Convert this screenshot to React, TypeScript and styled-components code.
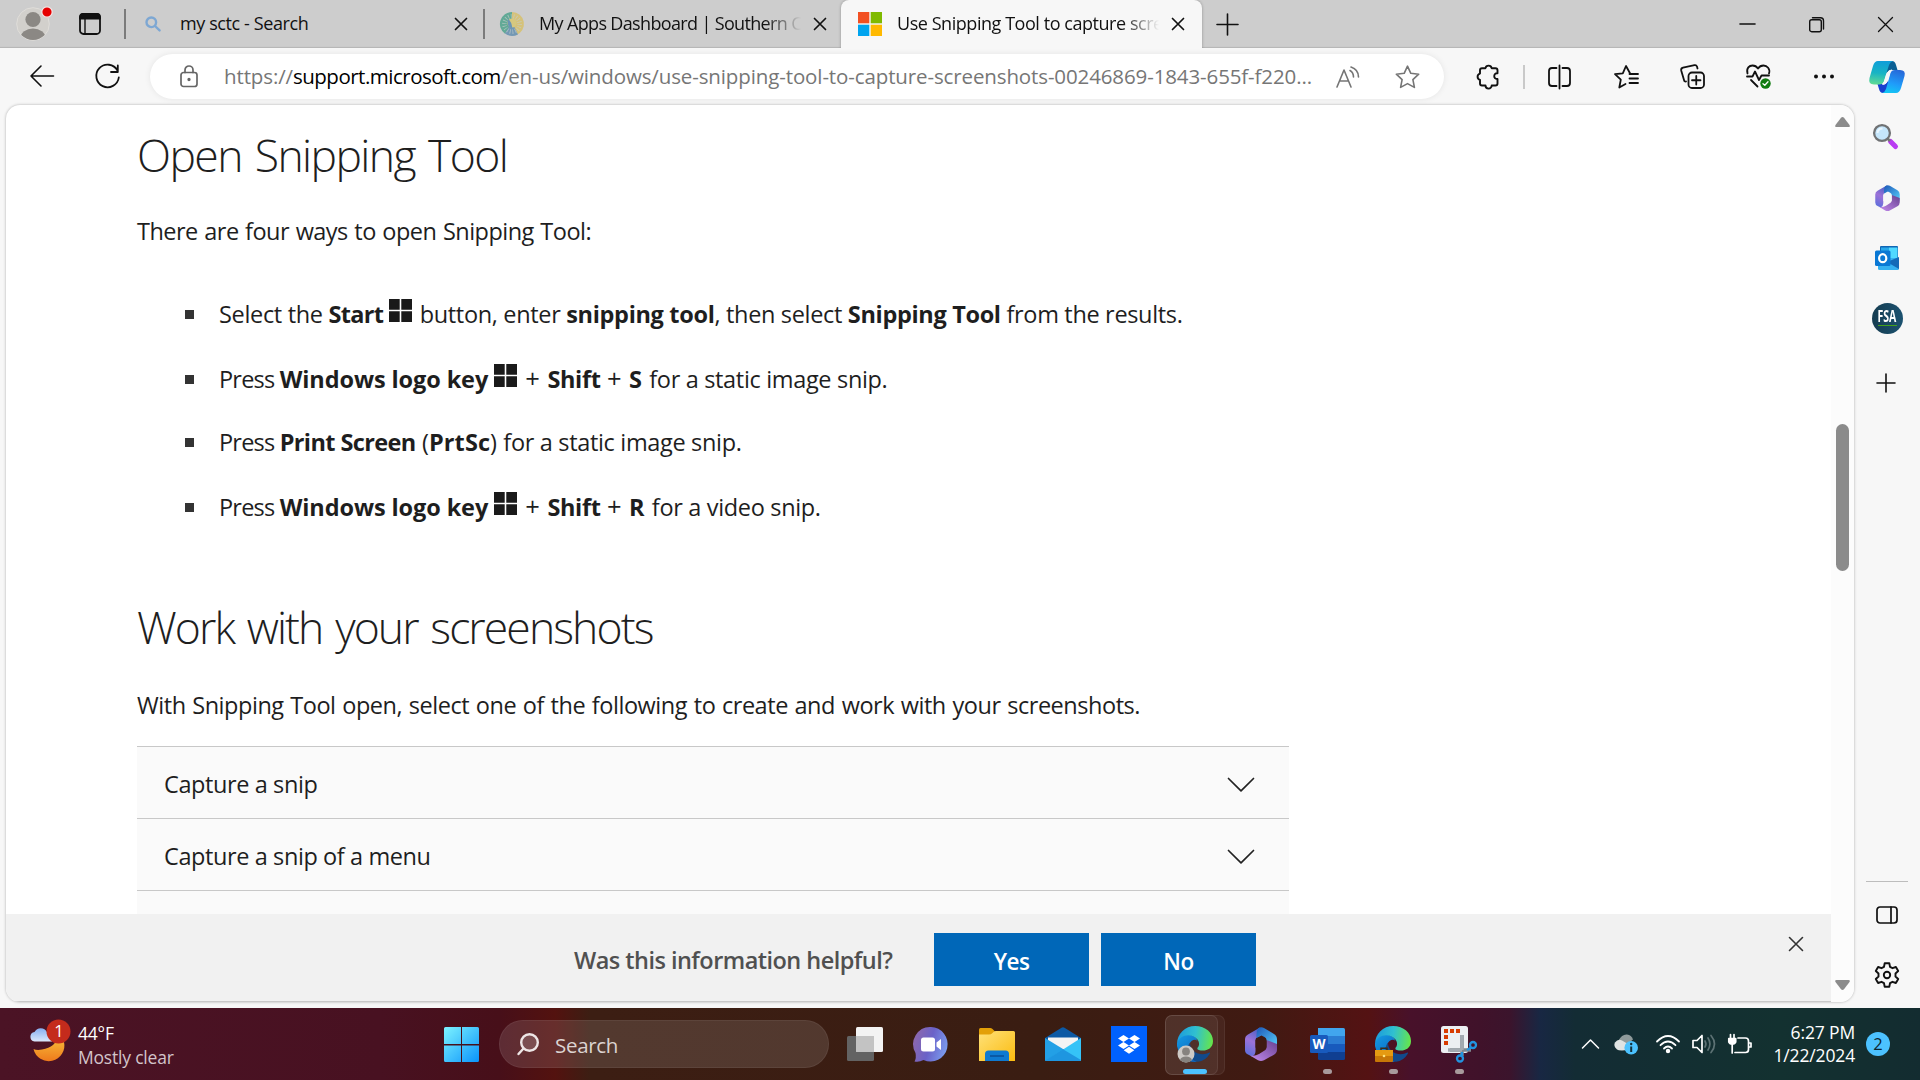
import React from "react";
import styled, { createGlobalStyle } from "styled-components";

const Global = createGlobalStyle`
  * { box-sizing: border-box; }
  html, body { margin: 0; padding: 0; overflow: hidden; }
  body { font-family: "Open Sans", "Noto Sans", sans-serif; color: #1e1e1e; }
  svg { display: block; flex: none; overflow: visible; }
  button { font: inherit; border: 0; background: none; padding: 0; }
`;

const Screen = styled.div`
  width: 1920px;
  height: 1080px;
  display: flex;
  flex-direction: column;
  background: #f7f7f7;
  overflow: hidden;
`;

/* ---------- shared ---------- */
const Slot = styled.span<{ $w: number; $ml?: number }>`
  width: ${(p) => p.$w}px;
  margin-left: ${(p) => p.$ml ?? 0}px;
  display: flex;
  justify-content: center;
  align-items: center;
  flex: none;
`;

/* ---------- tab strip ---------- */
const TabStrip = styled.header`
  height: 48px;
  flex: none;
  display: flex;
  align-items: center;
  background: #cdcdcd;
  box-shadow: inset 0 -2px 1px -1px #b5b5b5;
`;
const Divider = styled.span<{ $ml: number; $h: number; $c: string }>`
  width: 2px;
  height: ${(p) => p.$h}px;
  margin-left: ${(p) => p.$ml}px;
  background: ${(p) => p.$c};
  flex: none;
`;
const Tab = styled.div<{ $w: number; $pl: number; $active?: boolean }>`
  width: ${(p) => p.$w}px;
  height: 48px;
  padding-left: ${(p) => p.$pl}px;
  display: flex;
  align-items: center;
  flex: none;
  border-radius: 8px 8px 0 0;
  background: ${(p) => (p.$active ? "#f7f7f7" : "transparent")};
  box-shadow: ${(p) => (p.$active ? "0 0 3px rgba(0,0,0,.3)" : "none")};
  clip-path: inset(0 -4px 0 -4px);
`;
const TabTitle = styled.span<{ $w: number; $ml: number; $ls: number; $fade?: boolean }>`
  width: ${(p) => p.$w}px;
  margin-left: ${(p) => p.$ml}px;
  padding-bottom: 2px;
  font-size: 18px;
  line-height: 28px;
  letter-spacing: ${(p) => p.$ls}px;
  color: #111;
  white-space: nowrap;
  flex: none;
  mask-image: ${(p) => (p.$fade ? "linear-gradient(90deg,#000 calc(100% - 36px),transparent)" : "none")};
`;

/* ---------- toolbar ---------- */
const Toolbar = styled.nav`
  height: 57px;
  flex: none;
  display: flex;
  align-items: center;
`;
const AddressBar = styled.div`
  width: 1294px;
  height: 45px;
  margin-left: 30px;
  padding-left: 30px;
  display: flex;
  align-items: center;
  flex: none;
  border-radius: 23px;
  background: #fff;
  box-shadow: 0 0 6px rgba(0, 0, 0, 0.08);
`;
const Url = styled.span`
  width: 1092px;
  margin-left: 26px;
  padding-bottom: 2px;
  font-size: 20.5px;
  line-height: 30px;
  letter-spacing: -0.12px;
  color: #767676;
  white-space: nowrap;
  flex: none;
  b { font-weight: 400; letter-spacing: -0.5px; color: #000; }
`;

/* ---------- page body ---------- */
const Body = styled.div`
  height: 903px;
  flex: none;
  display: flex;
  padding-left: 6px;
`;
const Page = styled.section`
  width: 1848px;
  height: 897px;
  display: flex;
  background: #fff;
  border-radius: 14px;
  box-shadow: 0 0 3px rgba(0, 0, 0, 0.3);
  overflow: hidden;
  flex: none;
`;
const Document = styled.div`
  width: 1825px;
  display: flex;
  flex-direction: column;
  border-bottom: 1px solid #c8c8c8;
`;
const Article = styled.article`
  height: 809px;
  flex: none;
  padding: 20px 0 0 131px;
  overflow: hidden;
`;
const Heading = styled.h2<{ $mt: number; $ls: number }>`
  margin: ${(p) => p.$mt}px 0 0;
  font-size: 44.5px;
  font-weight: 300;
  line-height: 60px;
  letter-spacing: ${(p) => p.$ls}px;
  word-spacing: 3px;
  white-space: nowrap;
`;
const Paragraph = styled.p<{ $mt: number; $ls: number }>`
  margin: ${(p) => p.$mt}px 0 0;
  font-size: 23.5px;
  line-height: 36px;
  letter-spacing: ${(p) => p.$ls}px;
  word-spacing: 1px;
  white-space: nowrap;
`;
const Steps = styled.ul`
  list-style: none;
  margin: 45px 0 0;
  padding: 0 0 0 48px;
`;
const Step = styled.li<{ $key?: boolean }>`
  display: flex;
  align-items: center;
  padding-top: ${(p) => (p.$key ? 2 : 0)}px;
  margin-bottom: 27px;
  font-size: 23.5px;
  line-height: 36px;
  letter-spacing: -0.33px;
  white-space: nowrap;
  &::before {
    content: "";
    width: 9px;
    height: 9px;
    margin-right: 25px;
    background: #333;
    flex: none;
  }
  svg { display: inline-block; vertical-align: 1px; margin-right: 2px; }
`;
const Spaced = styled.span<{ $ls: number; $bold?: boolean }>`
  letter-spacing: ${(p) => p.$ls}px;
  font-weight: ${(p) => (p.$bold ? 700 : 400)};
`;
const PlusSign = styled.span`
  margin: 0 2px 0 0.6px;
  font-size: 25.5px;
  line-height: 20px;
`;
const Accordion = styled.div`
  width: 1152px;
  margin-top: 23px;
`;
const AccordionRow = styled.div`
  height: 72px;
  padding: 3px 35px 0 27px;
  display: flex;
  align-items: center;
  justify-content: space-between;
  border-top: 1px solid #c8c8c8;
  background: #fafafa;
  font-size: 23.5px;
  letter-spacing: -0.4px;
  svg { margin-top: 2px; }
`;
const Feedback = styled.div`
  height: 87px;
  flex: none;
  display: flex;
  padding-left: 568px;
  background: #f1f1f1;
`;
const Question = styled.span`
  width: 360px;
  padding-top: 28px;
  font-size: 23.5px;
  font-weight: 600;
  line-height: 36px;
  letter-spacing: -0.53px;
  color: #505050;
  white-space: nowrap;
`;
const Answer = styled.button`
  width: 155px;
  height: 53px;
  margin: 19px 12px 0 0;
  padding-top: 3px;
  background: #0067b8;
  color: #fff;
  font-size: 22.5px;
  font-weight: 600;
  letter-spacing: -0.5px;
`;
const Dismiss = styled.button`
  width: 14px;
  height: 14px;
  margin: 23px 0 0 521px;
`;
const Scrollbar = styled.div`
  width: 23px;
  padding: 12px 0 12px;
  display: flex;
  flex-direction: column;
  align-items: center;
  background: #fcfcfc;
`;
const Thumb = styled.div`
  width: 13px;
  height: 147px;
  margin: 297px 0 409px;
  border-radius: 7px;
  background: #8b8b8b;
  flex: none;
`;

/* ---------- sidebar ---------- */
const Sidebar = styled.aside`
  width: 66px;
  display: flex;
  flex-direction: column;
  align-items: center;
`;
const SideItem = styled.span<{ $mt: number; $h: number; $mr?: number }>`
  height: ${(p) => p.$h}px;
  margin: ${(p) => p.$mt}px ${(p) => p.$mr ?? 0}px 0 0;
  display: flex;
  align-items: center;
  flex: none;
`;
const Fsa = styled.span`
  width: 31px;
  height: 31px;
  border-radius: 50%;
  background: linear-gradient(90deg, #153c50, #1c5270);
  display: flex;
  flex-direction: column;
  align-items: center;
  color: #fff;
  font: 700 15.5px/15px "Open Sans", sans-serif;
  padding-top: 6px;
  span { transform: scaleX(0.68); }
  &::after {
    content: "";
    width: 19px;
    height: 1px;
    margin-top: 1px;
    background: #43a01c;
  }
`;
const SideRule = styled.span`
  width: 42px;
  height: 1px;
  margin-top: 489px;
  background: #bdbdbd;
  flex: none;
`;

/* ---------- taskbar ---------- */
const Taskbar = styled.footer`
  height: 72px;
  flex: none;
  display: flex;
  align-items: center;
  background: linear-gradient(
    90deg,
    #4b1325 0, #481121 380px, #470f19 500px, #53120f 555px, #3c1e13 590px, #3a1d12 1040px,
    #401a12 1260px, #541213 1368px, #48112a 1410px, #40122a 1480px, #3b142c 1510px, #182743 1540px,
    #132c34 1575px, #133130 1780px, #132c30 1920px
  );
`;
const Weather = styled.div`
  width: 113px;
  margin-left: 6px;
  padding-top: 2px;
  display: flex;
  flex-direction: column;
  font-size: 17.5px;
  line-height: 24px;
  letter-spacing: -0.2px;
  white-space: nowrap;
  color: #fff;
  span + span { color: #d3c4ca; }
`;
const SearchBox = styled.div`
  width: 330px;
  height: 48px;
  margin-left: 20px;
  padding: 1px 0 0 17px;
  display: flex;
  align-items: center;
  gap: 16px;
  border-radius: 24px;
  border: 1px solid rgba(255, 255, 255, 0.06);
  background: rgba(255, 255, 255, 0.12);
  color: #dcd3d1;
  font-size: 20.5px;
  letter-spacing: -0.3px;
  flex: none;
`;
const AppButton = styled.div<{ $state?: "active" | "open" }>`
  position: relative;
  width: 66px;
  height: 60px;
  display: flex;
  justify-content: center;
  align-items: center;
  flex: none;
  &::after {
    content: "";
    position: absolute;
    left: ${(p) => (p.$state === "active" ? 21 : 28.5)}px;
    bottom: 0;
    width: ${(p) => (p.$state === "active" ? 24 : 9)}px;
    height: ${(p) => (p.$state ? 5 : 0)}px;
    border-radius: 3px;
    background: ${(p) => (p.$state === "active" ? "#4cc2ff" : "#a89a9c")};
  }
`;
const ActiveStack = styled.div`
  position: absolute;
  left: 3px;
  top: 1px;
  width: 60px;
  height: 60px;
  border-radius: 7px;
  border: 1px solid rgba(255, 255, 255, 0.06);
  background: rgba(255, 255, 255, 0.05);
  &::after {
    content: "";
    position: absolute;
    inset: -1px 6px -1px -1px;
    border-radius: 7px;
    border: 1px solid rgba(255, 255, 255, 0.08);
    background: rgba(255, 255, 255, 0.05);
  }
`;
const Raised = styled.span`
  position: relative;
  display: flex;
`;
const Clock = styled.div`
  width: 100px;
  margin-left: 3px;
  display: flex;
  flex-direction: column;
  align-items: flex-end;
  font-size: 17.5px;
  line-height: 23px;
  letter-spacing: -0.15px;
  color: #fff;
  white-space: nowrap;
  padding-bottom: 1px;
`;
const Count = styled.span`
  width: 24px;
  height: 24px;
  margin-left: 11px;
  border-radius: 50%;
  background: #4cc2ff;
  color: #0d2530;
  font-size: 16.5px;
  line-height: 24px;
  text-align: center;
`;

/* ---------- icons ---------- */
type LineProps = { w: number; h: number; c?: string; s?: number; children: React.ReactNode };
const Line = ({ w, h, c = "#111", s = 1.6, children }: LineProps) => (
  <svg width={w} height={h} viewBox={`0 0 ${w} ${h}`} fill="none" stroke={c} strokeWidth={s} strokeLinecap="round" strokeLinejoin="round">
    {children}
  </svg>
);
const Close = ({ size = 12, s = 1.7, c = "#111" }: { size?: number; s?: number; c?: string }) => (
  <Line w={size} h={size} s={s} c={c}>
    <path d={`M.5 .5L${size - 0.5} ${size - 0.5}M${size - 0.5} .5L.5 ${size - 0.5}`} />
  </Line>
);
const Plus = ({ size }: { size: number }) => (
  <Line w={size} h={size} s={1.6}>
    <path d={`M${size / 2} 0V${size}M0 ${size / 2}H${size}`} />
  </Line>
);
const Avatar = () => (
  <svg width="38" height="38" viewBox="0 0 38 38">
    <defs><clipPath id="av"><circle cx="17" cy="19" r="16" /></clipPath></defs>
    <circle cx="17" cy="19" r="16.3" fill="#d2d0cc" stroke="#e0deda" strokeWidth="1" />
    <g clipPath="url(#av)" fill="#8b8884">
      <circle cx="17" cy="14.500" r="7.600" />
      <ellipse cx="17" cy="32.500" rx="12.500" ry="9" />
    </g>
    <circle cx="31" cy="7" r="5.200" fill="#e60000" stroke="#f3e8e8" strokeWidth="1.200" />
  </svg>
);
const TabActions = () => (
  <Line w={22} h={22} s={1.8}>
    <rect x="1" y="1" width="20" height="20" rx="3.5" />
    <path d="M1 5.500V4q0-3 3-3h14q3 0 3 3v1.500z" fill="#111" />
    <path d="M6 6V21" strokeWidth="1.400" />
  </Line>
);
const SearchTab = () => (
  <Line w={16} h={16} c="#7da7d3" s={2.4}>
    <circle cx="6.3" cy="6.3" r="4.8" />
    <path d="M10 10L14.6 14.4" />
  </Line>
);
const SunLogo = () => (
  <svg width="24" height="24" viewBox="0 0 24 24">
    <path d="M12 0A12 12 0 0 1 16 23.3L12 12z" fill="#d5c27a" />
    <path d="M12 0A12 12 0 0 0 5 21.8L12 12z" fill="#62a996" />
    <path d="M5 21.5A12 12 0 0 0 18 22.4L12 10z" fill="#7398b4" />
    <circle cx="12" cy="12" r="7.600" fill="none" stroke="#c6cdca" strokeWidth="4.600" strokeDasharray=".8 1.850" opacity=".7" />
    <circle cx="12" cy="11" r="4.6" fill="#d6c87f" />
    <path d="M8 7Q11.500 9 12.500 17L8.500 14.500Q7 11 8 7z" fill="#6b94b5" />
  </svg>
);
const MsLogo = () => (
  <svg width="24" height="24" viewBox="0 0 24 24">
    <path fill="#f25022" d="M0 0h11.300v11.300H0z" /><path fill="#7fba00" d="M12.700 0H24v11.300H12.700z" />
    <path fill="#00a4ef" d="M0 12.700h11.300V24H0z" /><path fill="#ffb900" d="M12.700 12.700H24V24H12.700z" />
  </svg>
);
const Back = () => <Line w={24} h={23}><path d="M23.500 11H1M11 1L1 11L11 21" /></Line>;
const Refresh = () => (
  <Line w={25} h={25} s={1.8}><path d="M22.500 6.500A11.300 11.300 0 1 0 23.800 13.500M22.800 1.500V8H16" /></Line>
);
const Lock = () => (
  <Line w={18} h={23} c="#666" s={1.7}>
    <rect x="1" y="7.500" width="16" height="14" rx="2.500" />
    <path d="M5 7.500V5a4 4 0 0 1 8 0V7.500" /><circle cx="9" cy="14.500" r=".8" fill="#666" />
  </Line>
);
const ReadAloud = () => (
  <Line w={24} h={22} c="#757575" s={1.6}>
    <path d="M1 21L8 4L15 21M3.500 15H12.500" /><path d="M14 4.500Q17.500 6.500 17.500 11M15 1Q22.500 3.500 22.500 11" />
  </Line>
);
const starPath = "M12.500 1.200L15.800 8.300L23.700 9.200L17.900 14.600L19.400 22.400L12.500 18.600L5.600 22.400L7.100 14.600L1.300 9.200L9.200 8.300Z";
const Star = () => <Line w={25} h={24} c="#757575"><path d={starPath} /></Line>;
const Puzzle = () => (
  <Line w={23} h={25} s={1.9}>
    <path d="M8.500 4.200A3.100 3.100 0 0 1 14.600 4.200H18.500Q20.500 4.200 20.500 6.200V9.300C16.500 8.500 15.800 15.500 20.500 15V19.500Q20.500 21.500 18.500 21.500H14.700A3.100 3.100 0 0 1 8.500 21.500H5Q3 21.500 3 19.500V15.800A3.200 3.200 0 0 1 3 9.600V6.200Q3 4.200 5 4.200Z" />
  </Line>
);
const Split = () => (
  <Line w={23} h={24} s={1.8}>
    <path d="M8.500 3H4Q1 3 1 6V18Q1 21 4 21H8.500M14.500 3H19Q22 3 22 6V18Q22 21 19 21H14.500M11.500 .5V23.500" />
  </Line>
);
const Favorites = () => (
  <Line w={25} h={24} s={1.8}>
    <path d="M16 8.300L12 1L8.800 8.300L1 9.200L6.800 14.600L5.300 22.500L11.500 19" /><path d="M15.500 9H24M15.500 13.500H24M15.500 18H24" />
  </Line>
);
const Collections = () => (
  <Line w={25} h={25} s={1.8}>
    <rect x="8.500" y="8.500" width="15.500" height="15.500" rx="3.500" />
    <path d="M16.250 12V20.500M12 16.250H20.500M17.500 4.500L17 2.500Q16.300 .8 14.500 1.200L3 3.700Q.8 4.300 1.200 6.500L4 16Q4.500 18 6 17.500" />
  </Line>
);
const Heart = () => (
  <Line w={26} h={26} s={1.8}>
    <path d="M1.500 9.500C0 4 3.500 1.500 6.500 1.500Q10 1.500 12 4.500Q14 1.500 17.500 1.500C21 1.500 24.500 5 23 9.500M5 16L11.500 22.500" />
    <path d="M1 12.500H6.500L9 7.500L13 16L15.500 11.500H23" />
    <circle cx="19.500" cy="19.500" r="5.200" fill="#107c10" stroke="none" />
    <path d="M17 19.700L18.800 21.300L22 17.800" stroke="#fff" strokeWidth="1.300" />
  </Line>
);
const Dots = () => (
  <svg width="20" height="5" viewBox="0 0 20 5" fill="#111"><circle cx="2" cy="2.500" r="2" /><circle cx="10" cy="2.500" r="2" /><circle cx="18" cy="2.500" r="2" /></svg>
);
const Copilot = () => (
  <svg width="36" height="32" viewBox="0 0 36 32">
    <defs>
      <linearGradient id="cpA" x1=".3" y1="0" x2=".2" y2="1"><stop stopColor="#0f9ed8" /><stop offset=".5" stopColor="#18b4c4" /><stop offset="1" stopColor="#62dc92" /></linearGradient>
      <linearGradient id="cpB" x1=".7" y1="0" x2=".4" y2="1"><stop stopColor="#2768d8" /><stop offset=".6" stopColor="#1f9cfa" /><stop offset="1" stopColor="#14c4f4" /></linearGradient>
    </defs>
    <path d="M17 0H23Q26 0 27 4L28.500 9H22Q19 9 18 13L15 6Z" fill="#0a5f94" />
    <path d="M19 32H14Q11 32 10 28L8.500 23H14Q17 23 18 19L21 26Z" fill="#1740cf" />
    <path d="M9 0H24Q21 1 20 4L15 20Q14 23.500 10 23.500H5Q-1 23.500 .5 17L4 5Q5.500 0 9 0Z" fill="url(#cpA)" />
    <path d="M27 32H13Q16 31 17 28L21.500 12Q22.500 9 26 9H31Q37 9 35.500 15L32 27Q30.500 32 27 32Z" fill="url(#cpB)" />
    <path d="M22.500 9Q19 9.500 18 12.500L15.500 20.500Q14.800 22.500 13.500 23.300H15Q17.300 23 18.300 20L20.800 11.500Q21.300 9.800 22.500 9Z" fill="#f7f7f7" stroke="#f7f7f7" strokeWidth="1" />
  </svg>
);
const Magnifier = () => (
  <svg width="25" height="25" viewBox="0 0 25 25">
    <path d="M17.500 17.500L22.500 22.500" stroke="#b93cf2" strokeWidth="5" strokeLinecap="round" />
    <path d="M14.500 14.500L17 17" stroke="#777" strokeWidth="2.500" />
    <circle cx="9" cy="9" r="7.900" fill="#c5e6fb" stroke="#707274" strokeWidth="2.300" />
    <path d="M4.500 9Q5 4.500 9.500 4.500" stroke="#eaf7ff" strokeWidth="2" fill="none" />
  </svg>
);
const M365 = ({ w, h, hole }: { w: number; h: number; hole: string }) => {
  const id = `m${w}`;
  return (
    <svg width={w} height={h} viewBox="0 0 32 34">
      <defs>
        <linearGradient id={id + "a"} x1=".6" y1="0" x2=".2" y2="1"><stop stopColor="#4660c4" /><stop offset=".5" stopColor="#9c72d8" /><stop offset="1" stopColor="#5b6fdc" /></linearGradient>
        <linearGradient id={id + "b"} x1="0" y1="0" x2="1" y2="1"><stop stopColor="#1d57b8" /><stop offset="1" stopColor="#58d0fb" /></linearGradient>
        <linearGradient id={id + "c"} x1="0" y1="1" x2="1" y2="0"><stop stopColor="#c58cf0" /><stop offset="1" stopColor="#67418f" /></linearGradient>
      </defs>
      <path d="M15 .5L3 7.500Q0 9.200 0 12.500V23Q0 26 3 27.500L7 29.500Q10.500 28 10.500 24V13Q10.500 11 12.500 10L20 6Z" fill={`url(#${id}a)`} />
      <path d="M13 1.500Q16 -.8 19 1L29 7Q32 8.800 32 12.500V20.500L21.500 14V13Q21.500 11 19.500 10L16.500 8.500L11.500 11Q11 4 13 1.500Z" fill={`url(#${id}b)`} />
      <path d="M32 17V22.500Q32 26 29 27.700L19 33.300Q16 34.800 13 33.300L5 28.500Q10 29.500 14 27L20 23.300Q21.500 22.300 21.500 20V13Z" fill={`url(#${id}c)`} />
      <path d="M16 9.500L21.500 13V20.500L16 24L10.500 20.500V13Z" fill={hole} />
    </svg>
  );
};
const Outlook = () => (
  <svg width="24" height="24" viewBox="0 0 24 24">
    <rect x="5" y="0" width="18" height="20" rx="1" fill="#1066b5" /><path d="M14 1.500h8.500V12H14z" fill="#50d9ff" /><path d="M6 1.500h8V12H6z" fill="#28a8ea" />
    <path d="M3 12H24V22.500Q24 24 22.500 24H4.500Q3 24 3 22.500Z" fill="#35b1f1" /><path d="M24 11V23L12 16Z" fill="#146ab8" />
    <rect x="0" y="4.500" width="15.500" height="15.500" rx="1.500" fill="#0a78d4" /><ellipse cx="7.700" cy="12.200" rx="3.600" ry="4" fill="none" stroke="#fff" strokeWidth="2.200" />
  </svg>
);
const PanelIcon = () => <Line w={22} h={18} s={1.7}><rect x="1" y="1" width="20" height="16" rx="3" /><path d="M15 1V17" /></Line>;
const Gear = () => (
  <Line w={24} h={26} s={1.9}>
    <path d="M9.700 1.200H14.300L15 4.800L17.500 6.200L20.900 5L23.200 9L20.500 11.500V14.500L23.200 17L20.900 21L17.500 19.800L15 21.200L14.300 24.800H9.700L9 21.200L6.500 19.800L3.100 21L.8 17L3.500 14.500V11.500L.8 9L3.100 5L6.500 6.200L9 4.800Z" />
    <circle cx="12" cy="13" r="3.200" />
  </Line>
);
const Chevron = () => <Line w={26} h={14} s={1.7} c="#222"><path d="M.5 .5L13 12.800L25.500 .5" /></Line>;
const WinKey = () => (
  <svg width="23" height="23" viewBox="0 0 23 23" fill="#1a1a1a"><path d="M0 0h10.700v10.700H0zM12.300 0H23v10.700H12.300zM0 12.300h10.700V23H0zM12.300 12.300H23V23H12.300z" /></svg>
);
const WeatherIcon = () => (
  <svg width="42" height="48" viewBox="0 0 42 48">
    <defs>
      <linearGradient id="moon" x1="0" y1="0" x2="0" y2="1"><stop stopColor="#f9c23c" /><stop offset="1" stopColor="#ee7a1c" /></linearGradient>
      <linearGradient id="cld" x1="0" y1="0" x2="0" y2="1"><stop stopColor="#86aef0" /><stop offset="1" stopColor="#dce8fc" /></linearGradient>
    </defs>
    <path d="M28 16Q26 27 12 29.500Q7 30.500 3.500 29A15.500 15.500 0 1 0 34 22Q32 14 28 16Z" fill="url(#moon)" />
    <path d="M4.500 21.500A4.800 4.800 0 0 1 4.500 12A7 7 0 0 1 17 12Q22 12 22 21.500Z" fill="url(#cld)" />
    <circle cx="28.500" cy="11.500" r="12" fill="#c42b1c" />
    <text x="29" y="17.200" fill="#fff" fontSize="16.500" textAnchor="middle" fontFamily="Open Sans, sans-serif">1</text>
  </svg>
);
const StartIcon = () => (
  <svg width="35" height="35" viewBox="0 0 35 35">
    <defs><linearGradient id="st" gradientUnits="userSpaceOnUse" x1="0" y1="0" x2="35" y2="35"><stop stopColor="#7df3ff" /><stop offset="1" stopColor="#0a93fb" /></linearGradient></defs>
    <path fill="url(#st)" d="M1.500 0H17V17H0V1.500Q0 0 1.500 0ZM18 0H33.500Q35 0 35 1.500V17H18ZM0 18.500H17V35H1.500Q0 35 0 33.500ZM18 18.500H35V33.500Q35 35 33.500 35H18Z" />
  </svg>
);
const TaskSearch = () => <Line w={22} h={23} c="#eee6e6" s={2.4}><circle cx="12.500" cy="9.500" r="8.300" fill="rgba(255,255,255,.16)" /><path d="M6.500 15.500L1.500 21" /></Line>;
const TaskView = () => (
  <svg width="36" height="34" viewBox="0 0 36 34"><rect x="0" y="9" width="27" height="25" rx="1.500" fill="#636363" /><rect x="9" y="0" width="27" height="25" rx="1.500" fill="#f3f3f3" /><path d="M9 9H27V25H10Q9 25 9 24Z" fill="#c3c3c3" /></svg>
);
const Chat = () => (
  <svg width="34" height="35" viewBox="0 0 34 35">
    <defs><linearGradient id="ch" x1="0" y1=".3" x2="1" y2=".6"><stop stopColor="#8e68ac" /><stop offset=".5" stopColor="#6a62c8" /><stop offset="1" stopColor="#7b9df0" /></linearGradient></defs>
    <path d="M17 0A17 17.300 0 1 1 9.500 33Q5 35.500 .5 34.500Q2.500 31 1.500 26A17 17.300 0 0 1 17 0Z" fill="url(#ch)" />
    <rect x="7" y="10.500" width="14" height="14" rx="2.500" fill="#fff" /><path d="M22.500 15.500L27 12V23L22.500 19.500Z" fill="#fff" />
  </svg>
);
const Folder = () => (
  <svg width="36" height="33" viewBox="0 0 36 33">
    <defs><linearGradient id="fd" x1="0" y1="0" x2="1" y2="1"><stop stopColor="#ffe179" /><stop offset="1" stopColor="#fbbc10" /></linearGradient></defs>
    <path d="M0 1.500Q0 0 1.500 0H11Q12.500 0 13.500 1L16 3.500V12H0Z" fill="#e3a008" /><path d="M0 6.500H10Q12 6.500 13.500 5L14.500 4Q15.500 3 17 3H34.500Q36 3 36 4.500V33H0Z" fill="url(#fd)" />
    <path d="M6 33V26Q6 22.500 9.500 22.500H26.500Q30 22.500 30 26V33Z" fill="#0f7ad0" /><path d="M11 28H25" stroke="#0b4f96" strokeWidth="1.500" />
  </svg>
);
const Mail = () => (
  <svg width="36" height="34" viewBox="0 0 36 34">
    <path d="M0 11L16.500 .7Q18 -.2 19.500 .7L36 11V14H0Z" fill="#0c59a4" /><path d="M3 10.500H33V22H3Z" fill="#f4f4f4" />
    <path d="M0 11L36 33Q36 34 34.500 34H1.500Q0 34 0 32.500Z" fill="#23a0e6" />
    <path d="M0 34L36 11V32.500Q36 34 34.500 34Z" fill="#35c3f7" /><path d="M18 22.300L36 33Q35.700 34 34.500 34H1.500Q.5 34 .1 33.500Z" fill="#1e96e0" />
  </svg>
);
const Dropbox = () => (
  <svg width="36" height="36" viewBox="0 0 36 36">
    <rect width="36" height="36" fill="#0061fe" />
    <path fill="#fff" d="M12.500 9L18 12.500L12.500 16L7 12.500ZM23.500 9L29 12.500L23.500 16L18 12.500ZM12.500 16L18 19.500L12.500 23L7 19.500ZM23.500 16L29 19.500L23.500 23L18 19.500ZM18 20.800L23.300 24.200L18 27.700L12.700 24.200Z" />
  </svg>
);
const Edge = ({ badge }: { badge: "person" | "case" }) => {
  const id = "e" + badge;
  return (
    <svg width="36" height="36" viewBox="0 0 36 36">
      <defs>
        <linearGradient id={id + "t"} x1="0" y1=".4" x2="1" y2=".5"><stop stopColor="#1c9bdc" /><stop offset=".5" stopColor="#30c0d0" /><stop offset="1" stopColor="#66e64a" /></linearGradient>
        <linearGradient id={id + "l"} x1="0" y1="0" x2=".6" y2="1"><stop stopColor="#149ce4" /><stop offset="1" stopColor="#0c66c0" /></linearGradient>
      </defs>
      <path d="M32.500 26.500Q27 29.500 21 27.500Q13 24.500 13 17Q9 21 10.500 27.500Q13 35.500 21 35.800Q28.500 35 32.800 27.700Q33.500 26 32.500 26.500Z" fill="#114a8b" />
      <path d="M0 17Q1.500 8.500 10 8.500Q18.500 8.800 20.500 15Q18 12.500 14.500 15Q8 21 12 29Q14.500 34 20 35.900Q4 37 0 20Z" fill={`url(#${id}l)`} />
      <path d="M0 18A18 18 0 0 1 18 0C29 0 36 7 36 15C36 22 30.500 24.500 26 24.500Q20.500 24.500 20.300 22.500Q20.500 21.700 21.500 20.500Q23 17 20.500 13.500C15 6.500 2 8 0 18Z" fill={`url(#${id}t)`} />
      {badge === "person" ? (
        <g><circle cx="9" cy="28" r="8.500" fill="#cdcac6" /><circle cx="9" cy="25.500" r="3.900" fill="#86837f" /><path d="M3 34Q4 30.500 9 30.500Q14 30.500 15 34Q9 39 3 34Z" fill="#86837f" /></g>
      ) : (
        <g><path d="M6 24V22.300H12V24" fill="none" stroke="#3a2a18" strokeWidth="1.500" /><rect x="0" y="24" width="18" height="12" rx="1" fill="#c77707" /><path d="M0 24H18V30H0Z" fill="#e59a12" /><circle cx="9" cy="30" r="1.300" fill="#ffe27a" /></g>
      )}
    </svg>
  );
};
const Word = () => (
  <svg width="35" height="32" viewBox="0 0 35 32">
    <path d="M8 0H33.500Q35 0 35 1.500V8H8Z" fill="#41a5ee" /><path d="M8 8H35V16H8Z" fill="#2b7cd3" /><path d="M8 16H35V24H8Z" fill="#185abd" /><path d="M8 24H35V30.500Q35 32 33.500 32H9.500Q8 32 8 30.500Z" fill="#103f91" />
    <rect x="0" y="7" width="18" height="18" rx="1.500" fill="#185abd" />
    <text x="9" y="21" fill="#fff" fontSize="13.500" fontWeight="700" textAnchor="middle" fontFamily="Open Sans, sans-serif">W</text>
  </svg>
);
const Snip = () => (
  <svg width="36" height="36" viewBox="0 0 36 36">
    <rect x="0" y="0" width="27" height="27" rx="2.500" fill="#eceff2" />
    <path fill="#d83b01" d="M3 3h4v4H3zM9 3h4v4H9zM15 3h4v4h-4zM3 9h4v4H3zM3 15h4v4H3z" />
    <path d="M9 24H30M21 9V30" stroke="#7d868f" strokeWidth="3.400" /><path d="M7 24H21M21 9V24" stroke="#a2a9b0" strokeWidth="3.400" />
    <circle cx="32" cy="19" r="3" fill="none" stroke="#2294e0" strokeWidth="2.300" /><circle cx="19" cy="32.500" r="3" fill="none" stroke="#2294e0" strokeWidth="2.300" />
    <path d="M26 24L30 21.500M21 26V29.500" stroke="#2294e0" strokeWidth="2.300" />
  </svg>
);
const OneDrive = () => (
  <svg width="24" height="21" viewBox="0 0 24 21">
    <path d="M4.500 6.500Q8 0 13 .5Q17.500 1 19 5.500L10 13Z" fill="#8f9a9b" /><path d="M3 15.500Q-1 12 1 8.500Q4 4.500 8 6.500L14 10V16Q5 17 3 15.500Z" fill="#dfe3e3" />
    <circle cx="17.200" cy="13.700" r="6.800" fill="#4cc2ff" /><path d="M17.200 12.500V18" stroke="#12303a" strokeWidth="2" /><circle cx="17.200" cy="10" r="1.200" fill="#12303a" />
  </svg>
);
const Wifi = () => (
  <Line w={24} h={18} c="#fff" s={1.8}>
    <path d="M1 6.500Q12 -4.500 23 6.500M4.500 10.200Q12 2.800 19.500 10.200M8 13.500Q12 9.500 16 13.500" /><circle cx="12" cy="16" r="1.300" fill="#fff" />
  </Line>
);
const Volume = () => (
  <Line w={24} h={20} c="#fff" s={1.7}>
    <path d="M1 6.500H5L10 1.500V18.500L5 13.500H1Z" /><path d="M13 7Q14.800 10 13 13M16 4Q19.800 10 16 16M19 1.500Q26 10 19 18.500" stroke="#5d7274" />
  </Line>
);
const Battery = () => (
  <Line w={24} h={21} c="#fff" s={1.7}>
    <path d="M10 4H17.500Q20.500 4 20.500 7V15.500Q20.500 18.500 17.500 18.500H7M21 9H23V13H21" /><path d="M2.500 .5V4M6 .5V4M4.200 9V19" /><path d="M.8 4.500H7.700V8Q7 10 4.200 10Q1.500 10 .8 8Z" fill="#fff" />
  </Line>
);

export default function App() {
  return (
    <Screen>
      <Global />
      <TabStrip>
        <Slot $w={38} $ml={16}><Avatar /></Slot>
        <Slot $w={22} $ml={25}><TabActions /></Slot>
        <Divider $ml={23} $h={30} $c="#7b7b7b" />
        <Tab $w={358} $pl={19}>
          <SearchTab />
          <TabTitle $w={260} $ml={19} $ls={-0.4}>my sctc - Search</TabTitle>
          <Slot $w={12} $ml={15}><Close /></Slot>
        </Tab>
        <Divider $ml={-1} $h={30} $c="#7b7b7b" />
        <Tab $w={356} $pl={15}>
          <SunLogo />
          <TabTitle $w={262} $ml={15} $ls={-0.65} $fade>My Apps Dashboard | Southern C</TabTitle>
          <Slot $w={12} $ml={13}><Close /></Slot>
        </Tab>
        <Tab $w={361} $pl={17} $active>
          <MsLogo />
          <TabTitle $w={262} $ml={15} $ls={-0.45} $fade>Use Snipping Tool to capture scre</TabTitle>
          <Slot $w={12} $ml={13}><Close /></Slot>
        </Tab>
        <Slot $w={21} $ml={15}><Plus size={21} /></Slot>
        <Slot $w={16} $ml={501}><Line w={15} h={2}><path d="M0 1H15" /></Line></Slot>
        <Slot $w={16} $ml={53}>
          <Line w={15} h={15} s={1.4}><rect x=".7" y="2.700" width="11.600" height="12" rx="2" /><path d="M3.500 .7H11.500Q14.500 .7 14.500 3.700V12" /></Line>
        </Slot>
        <Slot $w={16} $ml={53}><Close size={15} s={1.3} /></Slot>
      </TabStrip>

      <Toolbar>
        <Slot $w={24} $ml={30}><Back /></Slot>
        <Slot $w={25} $ml={41}><Refresh /></Slot>
        <AddressBar>
          <Lock />
          <Url>https://<b>support.microsoft.com</b>/en-us/windows/use-snipping-tool-to-capture-screenshots-00246869-1843-655f-f220...</Url>
          <Slot $w={24} $ml={20}><ReadAloud /></Slot>
          <Slot $w={25} $ml={35}><Star /></Slot>
        </AddressBar>
        <Slot $w={23} $ml={33}><Puzzle /></Slot>
        <Divider $ml={23} $h={24} $c="#c9c9c9" />
        <Slot $w={23} $ml={23}><Split /></Slot>
        <Slot $w={25} $ml={43}><Favorites /></Slot>
        <Slot $w={25} $ml={41}><Collections /></Slot>
        <Slot $w={26} $ml={41}><Heart /></Slot>
        <Slot $w={20} $ml={42}><Dots /></Slot>
        <Slot $w={36} $ml={35}><Copilot /></Slot>
      </Toolbar>

      <Body>
        <Page>
          <Document>
            <Article>
              <Heading $mt={0} $ls={-1.6}>Open Snipping Tool</Heading>
              <Paragraph $mt={28} $ls={-0.53}>There are four ways to open Snipping Tool:</Paragraph>
              <Steps>
                <Step $key>
                  <div>
                    Select the <Spaced $bold $ls={-0.7}>Start</Spaced> <WinKey /> button, enter <b>snipping tool</b>, then select <b>Snipping Tool</b> from the results.
                  </div>
                </Step>
                <Step $key>
                  <div>
                    <Spaced $ls={-0.8}>Press </Spaced><Spaced $bold $ls={-0.1}>Windows logo key</Spaced> <WinKey /> <PlusSign>+</PlusSign> <b>Shift</b> <PlusSign>+</PlusSign> <Spaced $bold $ls={1.5}>S</Spaced> for a static image snip.
                  </div>
                </Step>
                <Step>
                  <div>
                    <Spaced $ls={-0.8}>Press </Spaced><Spaced $bold $ls={-0.6}>Print Screen</Spaced><Spaced $ls={0.1}> (<b>PrtSc</b>) </Spaced>for a static image snip.
                  </div>
                </Step>
                <Step $key>
                  <div>
                    <Spaced $ls={-0.8}>Press </Spaced><Spaced $bold $ls={-0.1}>Windows logo key</Spaced> <WinKey /> <PlusSign>+</PlusSign> <b>Shift</b> <PlusSign>+</PlusSign> <Spaced $bold $ls={1.5}>R</Spaced> for a video snip.
                  </div>
                </Step>
              </Steps>
              <Heading $mt={72} $ls={-1.9}>Work with your screenshots</Heading>
              <Paragraph $mt={30} $ls={-0.46}>With Snipping Tool open, select one of the following to create and work with your screenshots.</Paragraph>
              <Accordion>
                <AccordionRow>Capture a snip<Chevron /></AccordionRow>
                <AccordionRow>Capture a snip of a menu<Chevron /></AccordionRow>
                <AccordionRow />
              </Accordion>
            </Article>
            <Feedback>
              <Question>Was this information helpful?</Question>
              <Answer>Yes</Answer>
              <Answer>No</Answer>
              <Dismiss><Close size={14} s={1.6} c="#333" /></Dismiss>
            </Feedback>
          </Document>
          <Scrollbar>
            <svg width="15" height="10" viewBox="0 0 15 10" fill="#8b8b8b"><path d="M6 .8Q7.500 -.6 9 .8L14.500 8Q15.500 10 13.500 10H1.500Q-.5 10 .5 8Z" /></svg>
            <Thumb />
            <svg width="15" height="10" viewBox="0 0 15 10" fill="#8b8b8b"><path d="M6 9.200Q7.500 10.600 9 9.200L14.500 2Q15.500 0 13.500 0H1.500Q-.5 0 .5 2Z" /></svg>
          </Scrollbar>
        </Page>
        <Sidebar>
          <SideItem $mt={19} $h={25} $mr={3}><Magnifier /></SideItem>
          <SideItem $mt={36} $h={26}><M365 w={25} h={26} hole="#f7f7f7" /></SideItem>
          <SideItem $mt={35} $h={24}><Outlook /></SideItem>
          <SideItem $mt={33} $h={31}><Fsa><span>FSA</span></Fsa></SideItem>
          <SideItem $mt={40} $h={18} $mr={2}><Plus size={18} /></SideItem>
          <SideRule />
          <SideItem $mt={24} $h={18}><PanelIcon /></SideItem>
          <SideItem $mt={38} $h={26}><Gear /></SideItem>
        </Sidebar>
      </Body>

      <Taskbar>
        <Slot $w={42} $ml={30}><WeatherIcon /></Slot>
        <Weather><span>44°F</span><span>Mostly clear</span></Weather>
        <Slot $w={35} $ml={253}><StartIcon /></Slot>
        <SearchBox><TaskSearch />Search</SearchBox>
        <Slot $w={3} />
        <AppButton><TaskView /></AppButton>
        <AppButton><Chat /></AppButton>
        <AppButton><Folder /></AppButton>
        <AppButton><Mail /></AppButton>
        <AppButton><Dropbox /></AppButton>
        <AppButton $state="active"><ActiveStack /><Raised><Edge badge="person" /></Raised></AppButton>
        <AppButton><M365 w={32} h={34} hole="#3f1a13" /></AppButton>
        <AppButton $state="open"><Word /></AppButton>
        <AppButton $state="open"><Edge badge="case" /></AppButton>
        <AppButton $state="open"><Snip /></AppButton>
        <Slot $w={18} $ml={89}><Line w={17} h={10} c="#fff" s={1.5}><path d="M.5 9L8.500 1L16.500 9" /></Line></Slot>
        <Slot $w={24} $ml={15}><OneDrive /></Slot>
        <Slot $w={24} $ml={18}><Wifi /></Slot>
        <Slot $w={24} $ml={12}><Volume /></Slot>
        <Slot $w={24} $ml={12}><Battery /></Slot>
        <Clock><span>6:27 PM</span><span>1/22/2024</span></Clock>
        <Count>2</Count>
      </Taskbar>
    </Screen>
  );
}
